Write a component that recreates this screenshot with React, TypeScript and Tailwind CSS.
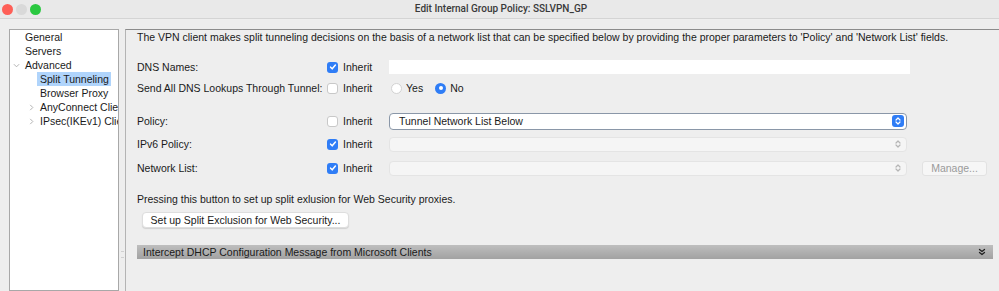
function Check({ on }: { on: boolean }) {
  return on ? (
    <span className="w-[11px] h-[11px] rounded-[3px] bg-[#2f7df6] flex items-center justify-center">
      <svg className="w-[8px] h-[8px]" viewBox="0 0 10 10" fill="none" stroke="white" strokeWidth={1.9} strokeLinecap="round" strokeLinejoin="round">
        <path d="M2 5.2l2 2.1L8 2.6" />
      </svg>
    </span>
  ) : (
    <span className="w-[11px] h-[11px] rounded-[3px] bg-white border border-[#c8c8c8]" />
  )
}

function Radio({ on }: { on: boolean }) {
  return on ? (
    <span className="w-[11px] h-[11px] rounded-full bg-[#2f7df6] flex items-center justify-center">
      <span className="w-[4px] h-[4px] rounded-full bg-white" />
    </span>
  ) : (
    <span className="w-[11px] h-[11px] rounded-full bg-white border border-[#d2d2d2]" />
  )
}

function Stepper({ active }: { active: boolean }) {
  return (
    <span className={`w-[12px] h-[12px] rounded-[3px] flex items-center justify-center ${active ? "bg-[#2f7df6]" : ""}`}>
      <svg className="w-[8px] h-[10px]" viewBox="0 0 8 10" fill="none" stroke={active ? "white" : "#b5b5b5"} strokeWidth={1.2} strokeLinecap="round" strokeLinejoin="round">
        <path d="M2 4l2-2 2 2M2 6l2 2 2-2" />
      </svg>
    </span>
  )
}

function Inherit({ on }: { on: boolean }) {
  return (
    <div className="w-[62px] flex items-center gap-[5px] shrink-0">
      <Check on={on} />
      <span>Inherit</span>
    </div>
  )
}

export default function App() {
  const tree = [
    { label: "General", level: 0, chevron: "" },
    { label: "Servers", level: 0, chevron: "" },
    { label: "Advanced", level: 0, chevron: "down" },
    { label: "Split Tunneling", level: 1, chevron: "", selected: true },
    { label: "Browser Proxy", level: 1, chevron: "" },
    { label: "AnyConnect Client", level: 1, chevron: "right" },
    { label: "IPsec(IKEv1) Client", level: 1, chevron: "right" },
  ]

  return (
    <div className="w-[999px] h-[291px] overflow-hidden bg-[#eeeeee] text-[10.5px] leading-[14px] text-[#1a1a1a] font-['Liberation_Sans',Arial,sans-serif] whitespace-nowrap">
      {/* Title bar */}
      <div className="h-[19px] bg-[#e9e9e9] border-b border-[#d4d4d4] flex items-center">
        <div className="flex items-center gap-[3px] pl-[2px]">
          <span className="w-[11px] h-[11px] rounded-full bg-[#fe5f57]" />
          <span className="w-[11px] h-[11px] rounded-full bg-[#d9d9d9]" />
          <span className="w-[11px] h-[11px] rounded-full bg-[#2ac840]" />
        </div>
        <div className="flex-1 text-center font-['Roboto',sans-serif] font-medium text-[10px] text-[#3a3a3a] -ml-[38px]">
          Edit Internal Group Policy: SSLVPN_GP
        </div>
      </div>

      <div className="flex pt-[10px] h-[272px]">
        {/* Tree */}
        <div className="ml-[9px] w-[110px] bg-white border border-[#a8a8a8] overflow-hidden">
          {tree.map((t, i) => (
            <div key={i} className="h-[14px] flex items-center">
              <span className={`shrink-0 flex items-center justify-center w-[9px] ${t.level ? "ml-[17px]" : "ml-[2px]"}`}>
                {t.chevron === "down" && (
                  <svg className="w-[7px] h-[7px]" viewBox="0 0 8 8" fill="none" stroke="#a8a8a8" strokeWidth={1}>
                    <path d="M1 2.5l3 3 3-3" />
                  </svg>
                )}
                {t.chevron === "right" && (
                  <svg className="w-[7px] h-[7px]" viewBox="0 0 8 8" fill="none" stroke="#a8a8a8" strokeWidth={1}>
                    <path d="M2.5 1l3 3-3 3" />
                  </svg>
                )}
              </span>
              <span className={t.selected ? "ml-[1px] bg-[#b0d4fb] pl-[3px] pr-[2px]" : "ml-[4px]"}>{t.label}</span>
            </div>
          ))}
        </div>

        {/* Splitter */}
        <div className="w-[6px] flex flex-col items-center justify-end pb-[33px]">
          <div className="w-[3px] h-[7px] border-y border-[#d0d0d0]" />
        </div>

        {/* Right panel */}
        <div className="flex-1 border-l border-[#b4b4b4] border-t border-t-[#8c8c8c] pl-[11px] flex flex-col">
          <div className="h-[14px]">
            The VPN client makes split tunneling decisions on the basis of a network list that can be specified below by providing the proper parameters to 'Policy' and 'Network List' fields.
          </div>

          <div className="mt-[13px] h-[20px] flex items-center">
            <span className="w-[190px] shrink-0">DNS Names:</span>
            <Inherit on />
            <div className="w-[521px] h-[14px] bg-white" />
          </div>

          <div className="mt-[1px] h-[20px] flex items-center">
            <span className="w-[190px] shrink-0">Send All DNS Lookups Through Tunnel:</span>
            <Inherit on={false} />
            <div className="flex items-center gap-[4px] ml-[2px]">
              <Radio on={false} />
              <span>Yes</span>
            </div>
            <div className="flex items-center gap-[4px] ml-[12px]">
              <Radio on />
              <span>No</span>
            </div>
          </div>

          <div className="mt-[13px] h-[20px] flex items-center">
            <span className="w-[190px] shrink-0">Policy:</span>
            <Inherit on={false} />
            <div className="w-[518px] h-[17px] bg-white border border-[#8a97a8] rounded-[4px] flex items-center pl-[9px] pr-[2px]">
              <span className="flex-1">Tunnel Network List Below</span>
              <Stepper active />
            </div>
          </div>

          <div className="mt-[3px] h-[20px] flex items-center">
            <span className="w-[190px] shrink-0">IPv6 Policy:</span>
            <Inherit on />
            <div className="w-[518px] h-[15px] bg-[#f5f5f5] border border-[#e4e4e4] rounded-[4px] flex items-center justify-end pr-[2px]">
              <Stepper active={false} />
            </div>
          </div>

          <div className="mt-[4px] h-[20px] flex items-center">
            <span className="w-[190px] shrink-0">Network List:</span>
            <Inherit on />
            <div className="w-[518px] h-[15px] bg-[#f5f5f5] border border-[#e4e4e4] rounded-[4px] flex items-center justify-end pr-[2px]">
              <Stepper active={false} />
            </div>
            <button className="ml-[15px] w-[65px] h-[15px] bg-[#f6f6f6] border border-[#e2e2e2] rounded-[3px] text-[#9a9a9a] text-[10.5px] leading-[13px]">
              Manage...
            </button>
          </div>

          <div className="mt-[14px] h-[14px]">Pressing this button to set up split exlusion for Web Security proxies.</div>

          <div className="mt-[6px] h-[16px]">
            <button className="ml-[5px] w-[207px] h-[16px] bg-white rounded-[4px] border border-[#dedede] shadow-[0_1px_1px_rgba(0,0,0,0.12)] text-[10.5px] leading-[14px]">
              Set up Split Exclusion for Web Security...
            </button>
          </div>

          <div className="mt-[17px] w-[856px] h-[14px] bg-gradient-to-b from-[#bebebe] to-[#a2a2a2] flex items-center pl-[6px] pr-[7px]">
            <span className="flex-1">Intercept DHCP Configuration Message from Microsoft Clients</span>
            <svg className="w-[8px] h-[8px]" viewBox="0 0 8 8" fill="none" stroke="#222" strokeWidth={1.3} strokeLinecap="round" strokeLinejoin="round">
              <path d="M1.5 1.5L4 3.5l2.5-2M1.5 4.5L4 6.5l2.5-2" />
            </svg>
          </div>
        </div>
      </div>
    </div>
  )
}
